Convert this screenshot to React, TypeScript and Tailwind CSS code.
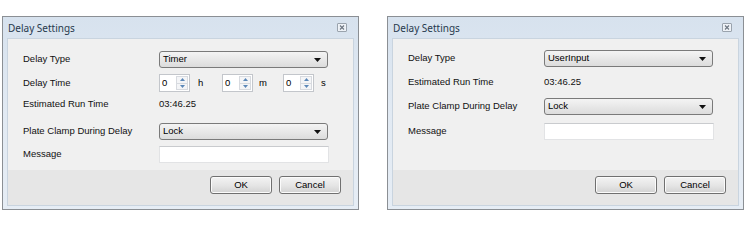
import type { ReactNode } from 'react'

const uiFont = { fontFamily: '"Liberation Sans", Arial, sans-serif' }
const titleFont = { fontFamily: '"Noto Sans", "Open Sans", sans-serif' }

function CloseBox() {
  return (
    <div className="flex h-[9px] w-[10px] items-center justify-center rounded-[1px] border border-[#9aa3ad] bg-[#eef2f7]">
      <svg width="6" height="5" viewBox="0 0 6 5">
        <path d="M1 0.5 L5 4.5 M5 0.5 L1 4.5" stroke="#6c7580" strokeWidth="1.1" />
      </svg>
    </div>
  )
}

function ComboBox({ value }: { value: string }) {
  return (
    <div className="flex h-[17px] w-[169px] items-center justify-between rounded-[3px] border border-[#7a7a7a] bg-gradient-to-b from-[#f4f4f4] to-[#dcdcdc] pl-[3px] pr-[6px] text-[9.5px] text-black">
      <span>{value}</span>
      <svg width="7" height="4" viewBox="0 0 7 4">
        <path d="M0 0 H7 L3.5 4 Z" fill="#111" />
      </svg>
    </div>
  )
}

function TextBox() {
  return <div className="h-[17px] w-[170px] border border-[#e2e3e5] border-t-[#c9cbce] bg-white" />
}

function Spinner() {
  return (
    <div className="flex h-[18px] w-[31px] items-stretch border border-[#c3c6cb] bg-white">
      <span className="flex-1 pl-[2px] pt-[2px] text-[9.5px] leading-[12px] text-black">0</span>
      <div className="my-[1px] mr-[1px] flex w-[12px] flex-col border border-[#d7dadf] bg-[#f4f5f7]">
        <div className="flex flex-1 items-center justify-center border-b border-[#d7dadf]">
          <svg width="5" height="3" viewBox="0 0 5 3">
            <path d="M0 3 L2.5 0 L5 3 Z" fill="#5c88b8" />
          </svg>
        </div>
        <div className="flex flex-1 items-center justify-center">
          <svg width="5" height="3" viewBox="0 0 5 3">
            <path d="M0 0 H5 L2.5 3 Z" fill="#5c88b8" />
          </svg>
        </div>
      </div>
    </div>
  )
}

function Row({ label, className, children }: { label: string; className: string; children: ReactNode }) {
  return (
    <div className={`flex items-center ${className}`}>
      <div className="w-[151px] pl-[15px] text-[9.5px] text-[#111]">{label}</div>
      {children}
    </div>
  )
}

function Button({ children }: { children: ReactNode }) {
  return (
    <div className="flex h-[18px] w-[62px] items-center justify-center rounded-[3px] border border-[#707070] bg-gradient-to-b from-[#f3f3f3] via-[#e6e6e6] to-[#d2d2d2] text-[9.5px] text-black shadow-[inset_0_0_0_1px_#fbfbfb]">
      {children}
    </div>
  )
}

function Dialog({ children, rows }: { children?: ReactNode; rows: ReactNode }) {
  return (
    <div className="flex h-[194px] w-[357px] flex-col border border-[#8b8f94] bg-gradient-to-b from-[#d7e2ee] via-[#e2eaf3] to-[#e6edf5]">
      <div className="flex h-[21px] items-center justify-between pl-[5px] pr-[11px]">
        <span style={titleFont} className="pt-[1px] text-[10px] text-[#27394d]">
          Delay Settings
        </span>
        <CloseBox />
      </div>
      <div className="mx-[4px] mb-[3px] flex flex-1 flex-col border border-[#c9d4df] bg-[#f0f0f0]">
        <div className="flex-1">{rows}</div>
        <div className="flex h-[35px] justify-end gap-[7px] bg-[#e6e6e6] pr-[12px] pt-[6px]">
          <Button>OK</Button>
          <Button>Cancel</Button>
        </div>
      </div>
      {children}
    </div>
  )
}

export default function App() {
  return (
    <div style={uiFont} className="flex h-[229px] w-[750px] gap-[28px] bg-white pl-[2px] pt-[16px]">
      <Dialog
        rows={
          <>
            <Row label="Delay Type" className="mt-[12px] h-[17px]">
              <ComboBox value="Timer" />
            </Row>
            <Row label="Delay Time" className="mt-[6px] h-[18px]">
              <Spinner />
              <span className="w-[32px] pl-[8px] text-[9.5px]">h</span>
              <Spinner />
              <span className="w-[30px] pl-[6px] text-[9.5px]">m</span>
              <Spinner />
              <span className="pl-[7px] text-[9.5px]">s</span>
            </Row>
            <Row label="Estimated Run Time" className="mt-[2px] h-[20px]">
              <span className="text-[9.5px] text-[#111]">03:46.25</span>
            </Row>
            <Row label="Plate Clamp During Delay" className="mt-[9px] h-[17px]">
              <ComboBox value="Lock" />
            </Row>
            <Row label="Message" className="mt-[6px] h-[17px]">
              <TextBox />
            </Row>
          </>
        }
      />
      <Dialog
        rows={
          <>
            <Row label="Delay Type" className="mt-[11px] h-[17px]">
              <ComboBox value="UserInput" />
            </Row>
            <Row label="Estimated Run Time" className="mt-[6px] h-[18px]">
              <span className="text-[9.5px] text-[#111]">03:46.25</span>
            </Row>
            <Row label="Plate Clamp During Delay" className="mt-[7px] h-[17px]">
              <ComboBox value="Lock" />
            </Row>
            <Row label="Message" className="mt-[8px] h-[16px]">
              <TextBox />
            </Row>
          </>
        }
      />
    </div>
  )
}
